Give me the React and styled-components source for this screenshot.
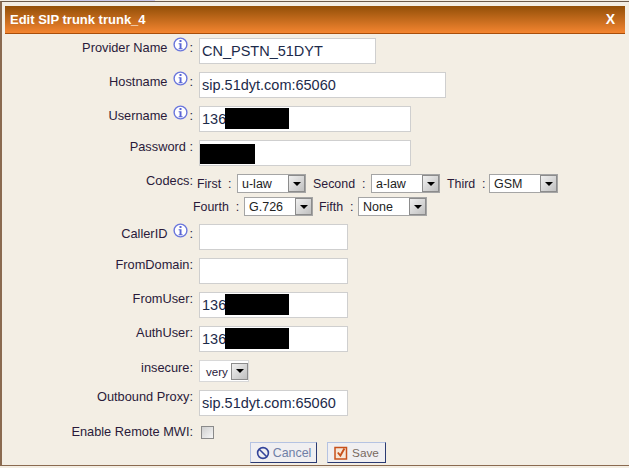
import React from "react";
import styled, { createGlobalStyle } from "styled-components";

const GlobalStyle = createGlobalStyle`
    html, body {
        margin: 0;
        padding: 0;
        background: #f3eee4;
    }
    body {
        font-family: "Liberation Sans", Arial, sans-serif;
        font-size: 12.4px;
        color: #2a1a3a;
    }
`;

const TopStrip = styled.div`
    width: 105px;
    height: 1px;
    margin-left: 50px;
    background: #c9c9ea;
`;

const Dialog = styled.div`
    box-sizing: border-box;
    width: 629px;
    height: 465px;
    overflow: hidden;
    background: #f3eee4;
    border-top: 1px solid #6b5a4a;
    border-left: 2px solid #8a6a50;
    border-bottom: 1px solid #8a6a50;
    padding: 4px 0 0 3px;
`;

const TitleBar = styled.div`
    display: flex;
    justify-content: space-between;
    align-items: center;
    box-sizing: border-box;
    width: 620px;
    height: 28px;
    padding: 0 10px 0 5px;
    background: linear-gradient(#924f08, #f48530);
    border-bottom: 1px solid #a84e0a;
    color: #fff;
    font-weight: bold;
    font-size: 13px;
`;

const CloseMark = styled.span`
    font-size: 14px;
    margin-top: -2px;
`;

const Form = styled.div`
    padding-top: 4px;
`;

const Row = styled.div`
    display: flex;
    align-items: flex-start;
    height: ${p => p.$h}px;
`;

const Label = styled.div`
    width: 188px;
    flex: none;
    margin-right: 6px;
    padding-top: ${p => p.$top || 0}px;
    font-size: 12.8px;
    text-align: right;
    white-space: nowrap;
    line-height: 14px;
`;

const InfoIcon = styled.svg`
    width: 15px;
    height: 15px;
    margin: -1px 1px 0 6px;
`;

const Field = styled.div`
    box-sizing: border-box;
    width: ${p => p.$w}px;
    height: 26px;
    background: #fff;
    border: 1px solid #cfcfcf;
    padding-left: 2px;
    font-size: 14.5px;
    line-height: 25px;
    color: #1c2a4a;
    white-space: nowrap;
    position: relative;
`;

const Redact = styled.div`
    position: absolute;
    top: ${p => p.$t}px;
    left: ${p => p.$l}px;
    width: ${p => p.$w}px;
    height: ${p => p.$hh}px;
    background: #000;
`;

const CodecGrid = styled.div`
    margin-left: -6px;
    display: flex;
    flex-direction: column;
    gap: 4px;
`;

const CodecLine = styled.div`
    display: flex;
    align-items: center;
    height: 19px;
    padding-left: ${p => p.$in}px;
`;

const CodecName = styled.span`
    flex: none;
    width: ${p => p.$w}px;
    white-space: pre;
`;

const Select = styled.div`
    box-sizing: border-box;
    flex: none;
    display: flex;
    justify-content: space-between;
    align-items: center;
    width: 69px;
    height: 19px;
    margin-right: ${p => p.$after}px;
    padding-left: 4px;
    background: #fff;
    border: 1px solid #a5a5a5;
    font-size: 12.5px;
    color: #222;
`;

const Arrow = styled.div`
    box-sizing: border-box;
    flex: none;
    width: 17px;
    height: 17px;
    display: flex;
    align-items: center;
    justify-content: center;
    background: linear-gradient(135deg, #f0f0f0, #c0c0c0);
    border: 1px solid #8c8c8c;
    &::after {
        content: "";
        border-left: 4px solid transparent;
        border-right: 4px solid transparent;
        border-top: 4px solid #000;
    }
`;

const SmallSelect = styled.div`
    box-sizing: border-box;
    display: flex;
    align-items: center;
    justify-content: space-between;
    width: 50px;
    height: 22px;
    padding: 0 0 0 6px;
    background: #fff;
    border: 1px solid #d8d8d8;
    font-size: 11.6px;
`;

const Checkbox = styled.div`
    box-sizing: border-box;
    width: 13px;
    height: 13px;
    margin: 1px 0 0 2px;
    border: 1px solid #8a8a8a;
    background: linear-gradient(135deg, #cfcfcf, #f6f6f6);
`;

const Buttons = styled.div`
    display: flex;
    gap: 10px;
    padding-left: 245px;
`;

const Button = styled.div`
    box-sizing: border-box;
    display: flex;
    align-items: center;
    justify-content: center;
    gap: ${p => p.$gap}px;
    width: ${p => p.$w}px;
    height: 21px;
    background: #f0eff1;
    border: 1px solid #b5c3e2;
    border-right-color: #2a3a72;
    border-bottom-color: #2a3a72;
    color: ${p => p.$color};
    font-size: ${p => p.$size}px;
`;

const Info = () => (
    <InfoIcon viewBox="0 0 15 15">
        <circle cx="7.5" cy="7.5" r="6.4" fill="#fff" stroke="#6a76dc" strokeWidth="1.4" />
        <rect x="6.5" y="3" width="2" height="2" fill="#5a66d4" />
        <path d="M5.6 6.2h2.9v5h1.1v1H5.6v-1h1V7.2h-1z" fill="#5a66d4" />
    </InfoIcon>
);

const TextRow = ({ label, info, w, value, redact, h = 34 }) => (
    <Row $h={h}>
        <Label>{label}{info && <Info />}:</Label>
        <Field $w={w}>
            {value}
            {redact && <Redact $l={redact[0]} $w={redact[1]} $t={redact[2]} $hh={redact[3]} />}
        </Field>
    </Row>
);

const Codec = ({ name, w, value, after = 7 }) => (
    <>
        <CodecName $w={w}>{name}  :</CodecName>
        <Select $after={after}>{value}<Arrow /></Select>
    </>
);

const App = () => (
    <>
        <GlobalStyle />
        <TopStrip />
        <Dialog>
            <TitleBar>
                <span>Edit SIP trunk trunk_4</span>
                <CloseMark>X</CloseMark>
            </TitleBar>
            <Form>
                <TextRow label="Provider Name" info w={177} value="CN_PSTN_51DYT" />
                <TextRow label="Hostname" info w={247} value="sip.51dyt.com:65060" />
                <TextRow label="Username" info w={212} value="136" redact={[25, 64, 1, 21]} />
                <TextRow label="Password " w={212} redact={[0, 55, 3, 20]} />
                <Row $h={50}>
                    <Label>Codecs:</Label>
                    <CodecGrid>
                        <CodecLine $in={4}>
                            <Codec name="First" w={40} value="u-law" />
                            <Codec name="Second" w={58} value="a-law" />
                            <Codec name="Third" w={42} value="GSM" />
                        </CodecLine>
                        <CodecLine $in={0}>
                            <Codec name="Fourth" w={51} value="G.726" after={6} />
                            <Codec name="Fifth" w={39} value="None" />
                        </CodecLine>
                    </CodecGrid>
                </Row>
                <TextRow label="CallerID" info w={149} />
                <TextRow label="FromDomain" w={149} />
                <TextRow label="FromUser" w={149} value="136" redact={[25, 64, 1, 21]} />
                <TextRow label="AuthUser" w={149} value="136" redact={[25, 64, 1, 21]} />
                <Row $h={30}>
                    <Label $top={1}>insecure:</Label>
                    <SmallSelect>very<Arrow /></SmallSelect>
                </Row>
                <TextRow label="Outbound Proxy" w={149} value="sip.51dyt.com:65060" h={35} />
                <Row $h={17}>
                    <Label>Enable Remote MWI:</Label>
                    <Checkbox />
                </Row>
                <Buttons>
                    <Button $w={67} $gap={3} $color="#6f7fa6" $size={12.4}>
                        <svg width="14" height="14" viewBox="0 0 14 14">
                            <circle cx="7" cy="7" r="5.4" fill="none" stroke="#33449a" strokeWidth="1.6" />
                            <path d="M3.2 3.2l7.6 7.6" stroke="#33449a" strokeWidth="1.6" />
                        </svg>
                        Cancel
                    </Button>
                    <Button $w={59} $gap={4} $color="#77695f" $size={11.8}>
                        <svg width="14" height="14" viewBox="0 0 14 14">
                            <rect x="1" y="1.5" width="11.5" height="11.5" fill="#f6e6d8" stroke="#c8501a" strokeWidth="1.5" />
                            <path d="M3.8 6.5l2.6 3 4-7" fill="none" stroke="#c8501a" strokeWidth="1.9" />
                        </svg>
                        Save
                    </Button>
                </Buttons>
            </Form>
        </Dialog>
    </>
);

export default App;
